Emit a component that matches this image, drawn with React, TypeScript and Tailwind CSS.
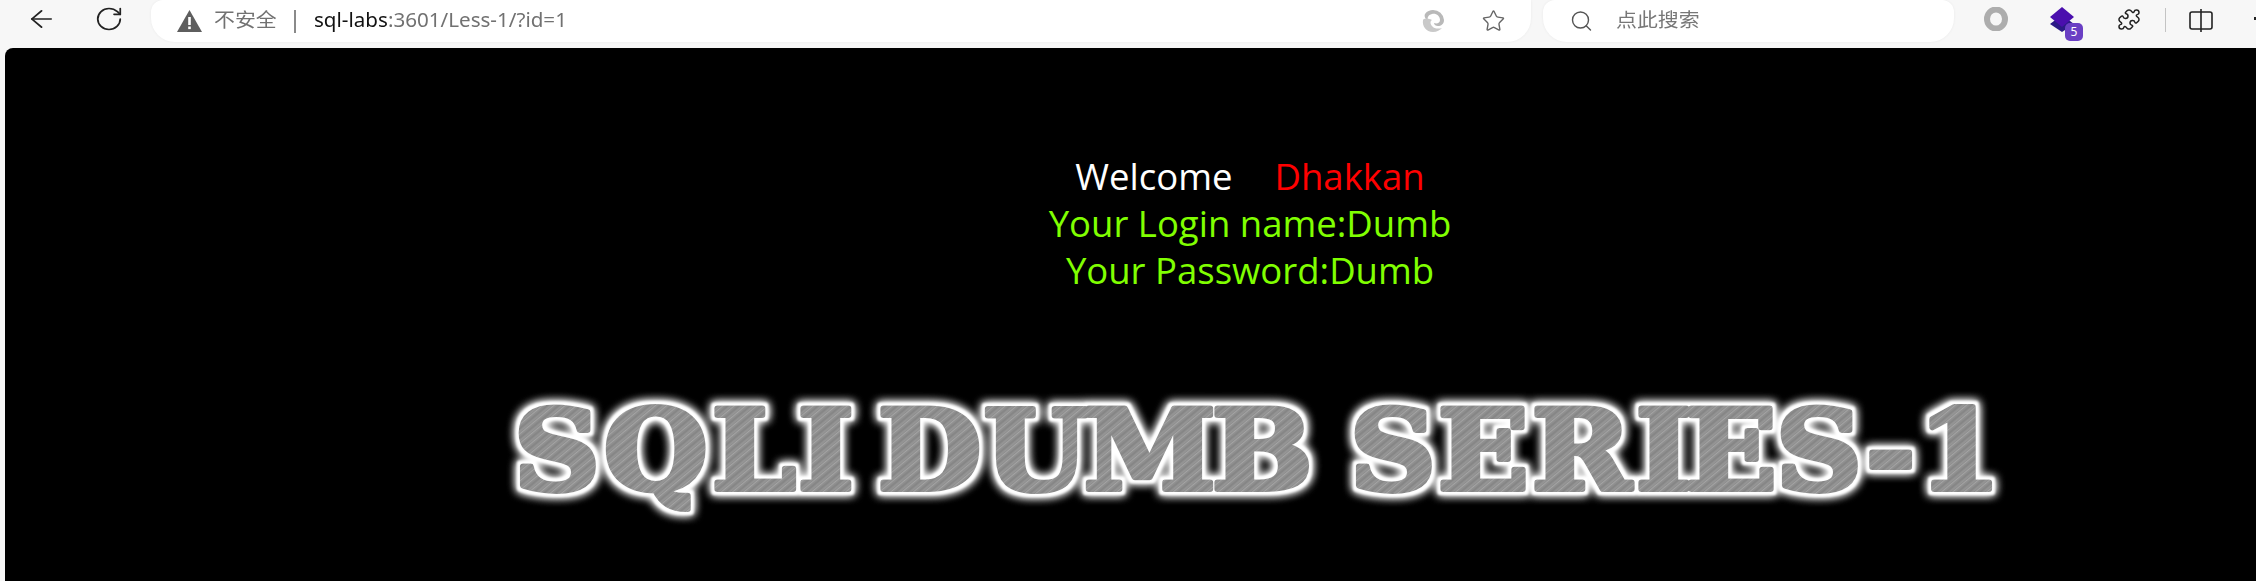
import { ArrowLeft, Puzzle, RotateCw, Search, Star } from "lucide-react";

const LOGO_TEXT = "SQLI DUMB SERIES-1";
const LOGO_SCALE = 1.08;
// left edge of every glyph in the banner, measured on the page, minus the svg's own offset
const LOGO_X = [38, 128, 236, 322, 400, 402, 508, 608, 736, 850, 874, 962, 1056, 1160, 1210, 1300, 1390, 1442];

function EdgeSwirl() {
  return (
    <svg width="24" height="24" viewBox="0 0 24 24">
      <path d="M12 1a11 11 0 0 1 11 10c0 4-3 6-6 6-2 0-4-1-4-3 3 1 6 0 6-3 0-4-4-7-8-6C7 6 6 9 7 11 4 10 3 7 4 5c2-3 5-4 8-4Z" fill="#b9b9b9" />
      <path d="M2 11c-1 6 3 12 10 12 4 0 7-2 9-4-3 1-8 1-10-2-2-2-2-5 0-6C7 9 3 9 2 11Z" fill="#c9c9c9" />
    </svg>
  );
}

function LogoBanner() {
  const xs = LOGO_X.map((x) => x / LOGO_SCALE).join(" ");
  return (
    <svg width="1560" height="170" viewBox="0 0 1560 170" className="mt-[91px] ml-[471px] block">
      <defs>
        <pattern id="brush" width="7" height="7" patternUnits="userSpaceOnUse" patternTransform="rotate(-42)">
          <rect width="7" height="7" fill="#8e8e8e" />
          <rect width="7" height="1" fill="#a4a4a4" />
          <rect y="3" width="7" height="1" fill="#808080" />
          <rect y="5" width="7" height="1" fill="#989898" />
        </pattern>
        <filter id="glow" x="-5%" y="-30%" width="110%" height="160%">
          <feMorphology in="SourceAlpha" operator="dilate" radius="2.5" result="fat" />
          <feFlood floodColor="#ffffff" result="white" />
          <feComposite in="white" in2="fat" operator="in" result="edge" />
          <feGaussianBlur in="edge" stdDeviation="5" result="halo" />
          <feGaussianBlur in="edge" stdDeviation="1" result="soft" />
          <feMerge>
            <feMergeNode in="halo" />
            <feMergeNode in="halo" />
            <feMergeNode in="soft" />
            <feMergeNode in="SourceGraphic" />
          </feMerge>
        </filter>
      </defs>
      <g filter="url(#glow)">
        <text
          transform={`scale(${LOGO_SCALE} 1)`}
          x={xs}
          y="104"
          fontFamily="'DejaVu Serif', serif"
          fontWeight="700"
          fontSize="110"
          fill="url(#brush)"
          stroke="url(#brush)"
          strokeWidth="6"
          strokeLinejoin="round"
        >
          {LOGO_TEXT}
        </text>
      </g>
    </svg>
  );
}

export default function App() {
  return (
    <div className="w-[2256px] h-[581px] overflow-hidden bg-[#f7f7f7] font-['Noto_Sans','Noto_Sans_CJK_SC',sans-serif]">
      <div className="h-[48px] flex items-start">
        <ArrowLeft className="ml-[25px] mt-[5px] text-[#222]" width={33} height={28} strokeWidth={1.4} preserveAspectRatio="none" />
        <RotateCw className="ml-[36px] mt-[5px] text-[#222]" width={30} height={28} strokeWidth={1.4} preserveAspectRatio="none" />
        <div className="ml-[27px] w-[1380px] h-[42px] bg-white rounded-b-[24px] rounded-tl-[12px] shadow-[0_0_3px_rgba(0,0,0,0.06)] flex items-center pl-[26px] pr-[25px]">
          <svg width="25" height="22" viewBox="0 0 25 22">
            <path d="M12.5 0 25 22H0Z" fill="#5e5e5e" />
            <rect x="11.2" y="7" width="2.6" height="8" fill="#fff" />
            <rect x="11.2" y="16.5" width="2.6" height="2.6" fill="#fff" />
          </svg>
          <span className="ml-[12px] w-[63px] text-[#717171]">
            <span className="inline-block origin-left scale-x-[1.1] text-[19px] leading-none whitespace-nowrap">不安全</span>
          </span>
          <span className="ml-[17px] w-[2px] h-[23px] bg-[#8a8a8a]" />
          <span className="ml-[18px] flex-1">
            <span className="inline-block origin-left scale-x-[1.03] text-[20px] leading-none whitespace-nowrap text-[#717171]">
              <span className="text-[#111]">sql-labs</span>:3601/Less-1/?id=1
            </span>
          </span>
          <EdgeSwirl />
          <Star className="ml-[36px] text-[#666]" width={25} height={24} strokeWidth={1.4} />
        </div>
        <div className="ml-[12px] w-[411px] h-[42px] bg-white rounded-b-[24px] rounded-t-[12px] shadow-[0_0_3px_rgba(0,0,0,0.06)] flex items-center pl-[26px]">
          <Search className="text-[#555]" width={25} height={24} strokeWidth={1.4} />
          <span className="ml-[22px]">
            <span className="inline-block origin-left scale-x-[1.1] text-[19px] leading-none whitespace-nowrap text-[#777]">点此搜索</span>
          </span>
        </div>
        <svg className="ml-[30px] mt-[7px]" width="24" height="24" viewBox="0 0 24 24">
          <ellipse cx="12" cy="12" rx="9" ry="9.5" fill="none" stroke="#adadad" strokeWidth="6" />
        </svg>
        <div className="relative ml-[42px] mt-[7px] w-[24px] h-[24px]">
          <svg width="24" height="25" viewBox="0 0 24 25">
            <path d="M12 8 24 17 12 25 0 17Z" fill="#2b1a86" />
            <path d="M12 0 24 10 12 20 0 10Z" fill="#4a0fae" />
          </svg>
          <span className="absolute left-[15px] top-[16px] w-[18px] h-[18px] rounded-[5px] bg-[#6a3fc4] text-white text-[12px] leading-[18px] text-center">5</span>
        </div>
        <Puzzle className="ml-[43px] mt-[8px] text-[#222]" width={24} height={23} strokeWidth={1.5} preserveAspectRatio="none" />
        <span className="ml-[24px] mt-[8px] w-[1px] h-[24px] bg-[#c4c4c4]" />
        <svg className="ml-[23px] mt-[9px]" width="24" height="23" viewBox="0 0 24 23" fill="none" stroke="#222" strokeWidth="1.6">
          <path d="M12 3H3a2 2 0 0 0-2 2v13a2 2 0 0 0 2 2h9M12 3h9a2 2 0 0 1 2 2v13a2 2 0 0 1-2 2h-9M12 0v23" />
        </svg>
        <span className="ml-[41px] mt-[17px] w-[2px] h-[3px] bg-[#222]" />
      </div>

      <div className="ml-[5px] h-[533px] bg-black rounded-tl-[8px] overflow-hidden">
        <div className="ml-[745px] w-[1000px] pt-[105px] text-center font-['Open_Sans',sans-serif] text-[36.5px] leading-[47px]">
          <div className="text-white">
            Welcome<span className="ml-[42px] text-[#ff0000]">Dhakkan</span>
          </div>
          <div className="text-[#80ff00]">Your Login name:Dumb</div>
          <div className="text-[#80ff00]">Your Password:Dumb</div>
        </div>
        <LogoBanner />
      </div>
    </div>
  );
}
